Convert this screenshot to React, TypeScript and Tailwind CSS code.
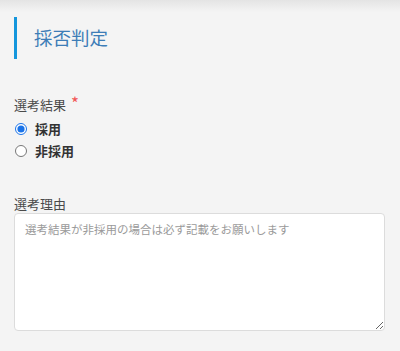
import React from "react";

export default function App() {
  const font = { fontFamily: '"Noto Sans CJK JP", "Noto Sans", sans-serif' };
  return (
    <div className="relative w-[400px] h-[351px] bg-[#f4f4f4] overflow-hidden" style={font}>
      <div className="absolute top-0 left-0 right-0 h-[12px] bg-gradient-to-b from-[#e4e4e4] to-[#f4f4f4]" />
      <div className="relative px-[14px] pt-[17px]">
        <div className="h-[42px] border-l-[3px] border-[#1496dc] pl-[17px] pb-[2px] flex items-center">
          <h2 className="text-[18.5px] text-[#3d7db7] leading-none">採否判定</h2>
        </div>
        <div className="mt-[36px]">
          <div className="flex items-start text-[13px] text-[#4a4a4a] leading-[20px]">
            選考結果
            <span className="text-[#f25555] text-[17px] leading-none ml-[5px] -mt-[1px]">*</span>
          </div>
          <div className="mt-[5px] flex flex-col gap-[4px]">
            <label className="flex items-center h-[18px]">
              <input type="radio" name="r" defaultChecked className="w-[12px] h-[12px] m-0 ml-[1px] accent-[#1a73e8]" />
              <span className="ml-[8px] text-[13px] font-bold text-[#333]">採用</span>
            </label>
            <label className="flex items-center h-[18px]">
              <input type="radio" name="r" className="w-[12px] h-[12px] m-0 ml-[1px]" />
              <span className="ml-[8px] text-[13px] font-bold text-[#333]">非採用</span>
            </label>
          </div>
        </div>
        <div className="mt-[36px]">
          <div className="text-[13px] text-[#4a4a4a] leading-[16px]">選考理由</div>
          <textarea
            className="mt-[1px] block w-[371px] h-[118px] bg-white border border-[#dcdcdc] rounded-[4px] px-[10px] pt-[7px] pb-[6px] text-[11.5px] placeholder:text-[#9a9a9a] outline-none"
            placeholder="選考結果が非採用の場合は必ず記載をお願いします"
          />
        </div>
      </div>
    </div>
  );
}
